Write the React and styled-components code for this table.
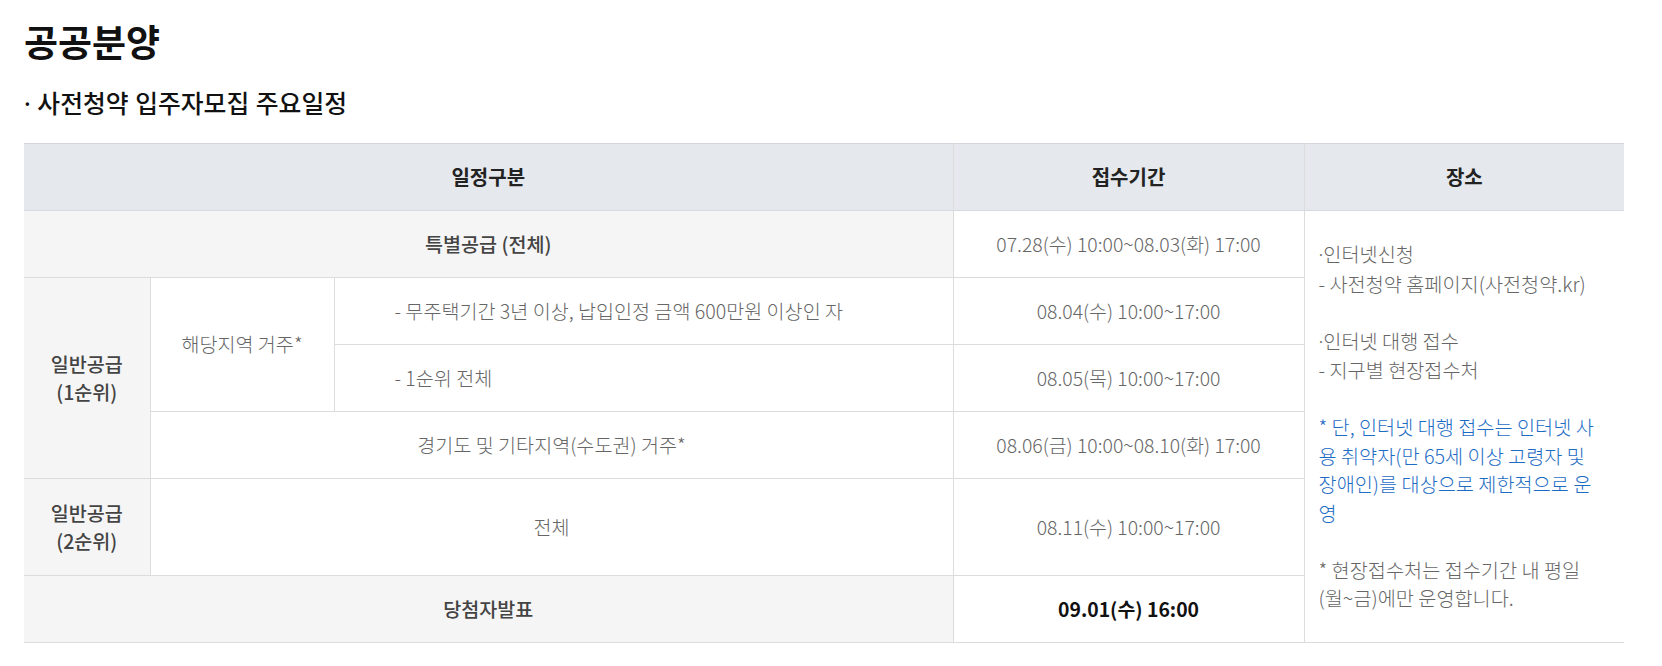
import styled, { createGlobalStyle } from 'styled-components';

const GlobalStyle = createGlobalStyle`
  body {
    margin: 0;
    background: #fff;
    font-family: 'Noto Sans CJK KR', 'Noto Sans', sans-serif;
  }
`;

const Page = styled.div`
  padding: 16px 24px 0;
`;

const Title = styled.h2`
  margin: 0;
  font-size: 37px;
  font-weight: 700;
  line-height: 50px;
  color: #111;
`;

const SubTitle = styled.h3`
  margin: 20px 0 0;
  font-size: 24.8px;
  font-weight: 500;
  line-height: 32px;
  word-spacing: 1px;
  color: #111;
`;

const Dot = styled.span`
  font-family: 'Noto Sans', sans-serif;
`;

const Table = styled.table`
  margin-top: 24px;
  width: 1600px;
  border-collapse: collapse;
  table-layout: fixed;
  border-top: 1px solid #d3d6da;
  border-bottom: 1px solid #dcdcdc;
  font-size: 19.6px;
  line-height: 28.5px;
`;

const Row = styled.tr`
  height: ${({ $h }) => $h || 67}px;
`;

const HeadCell = styled.th`
  background: #e5e8ec;
  color: #222;
  font-size: 20px;
  font-weight: 700;
  border-left: 1px solid #dcdcdc;
  border-bottom: 1px solid #d6d9dd;
  &:first-child {
    border-left: none;
  }
`;

const Cell = styled.td`
  border: 1px solid #dcdcdc;
  text-align: ${({ $left }) => ($left ? 'left' : 'center')};
  padding: ${({ $left }) => ($left ? '0 0 0 60px' : '0')};
  font-size: ${({ $size }) => ($size ? `${$size}px` : 'inherit')};
  color: ${({ $strong }) => ($strong ? '#111' : '#666')};
  font-weight: ${({ $strong }) => ($strong ? 700 : 300)};
  background: #fff;
  vertical-align: middle;
`;

const LabelCell = styled.th`
  border: 1px solid #dcdcdc;
  border-left: none;
  background: #f5f5f5;
  color: #444;
  font-weight: 500;
  vertical-align: middle;
`;

const PlaceCell = styled.td`
  border: 1px solid #dcdcdc;
  border-right: none;
  padding: 0 22px 0 14px;
  color: #666;
  font-size: 19.7px;
  font-weight: 300;
  word-break: break-all;
  vertical-align: middle;
`;

const Para = styled.p`
  margin: 0 0 28.5px;
  color: ${({ $blue }) => ($blue ? '#1d6cc4' : 'inherit')};
  &:last-child {
    margin-bottom: 0;
  }
`;

const DATE_SIZE = 19.4;

function App() {
  return (
    <Page>
      <GlobalStyle />
      <Title>공공분양</Title>
      <SubTitle>
        <Dot>·</Dot> 사전청약 입주자모집 주요일정
      </SubTitle>
      <Table>
        <colgroup>
          <col style={{ width: 126 }} />
          <col style={{ width: 184 }} />
          <col style={{ width: 619 }} />
          <col style={{ width: 351 }} />
          <col style={{ width: 320 }} />
        </colgroup>
        <thead>
          <Row>
            <HeadCell colSpan={3}>일정구분</HeadCell>
            <HeadCell>접수기간</HeadCell>
            <HeadCell>장소</HeadCell>
          </Row>
        </thead>
        <tbody>
          <Row>
            <LabelCell colSpan={3}>특별공급 (전체)</LabelCell>
            <Cell $size={DATE_SIZE}>07.28(수) 10:00~08.03(화) 17:00</Cell>
            <PlaceCell rowSpan={6}>
              <Para>
                <Dot>·</Dot>인터넷신청
                <br />- 사전청약 홈페이지(사전청약.kr)
              </Para>
              <Para>
                <Dot>·</Dot>인터넷 대행 접수
                <br />- 지구별 현장접수처
              </Para>
              <Para $blue>
                * 단, 인터넷 대행 접수는 인터넷 사용 취약자(만 65세 이상 고령자 및 장애인)를 대상으로 제한적으로 운영
              </Para>
              <Para>* 현장접수처는 접수기간 내 평일(월~금)에만 운영합니다.</Para>
            </PlaceCell>
          </Row>
          <Row>
            <LabelCell rowSpan={3}>
              일반공급
              <br />
              (1순위)
            </LabelCell>
            <Cell rowSpan={2}>해당지역 거주*</Cell>
            <Cell $left>- 무주택기간 3년 이상, 납입인정 금액 600만원 이상인 자</Cell>
            <Cell $size={DATE_SIZE}>08.04(수) 10:00~17:00</Cell>
          </Row>
          <Row>
            <Cell $left>- 1순위 전체</Cell>
            <Cell $size={DATE_SIZE}>08.05(목) 10:00~17:00</Cell>
          </Row>
          <Row>
            <Cell colSpan={2}>경기도 및 기타지역(수도권) 거주*</Cell>
            <Cell $size={DATE_SIZE}>08.06(금) 10:00~08.10(화) 17:00</Cell>
          </Row>
          <Row $h={97}>
            <LabelCell>
              일반공급
              <br />
              (2순위)
            </LabelCell>
            <Cell colSpan={2}>전체</Cell>
            <Cell $size={DATE_SIZE}>08.11(수) 10:00~17:00</Cell>
          </Row>
          <Row>
            <LabelCell colSpan={3}>당첨자발표</LabelCell>
            <Cell $strong $size={DATE_SIZE}>
              09.01(수) 16:00
            </Cell>
          </Row>
        </tbody>
      </Table>
    </Page>
  );
}

export default App;
